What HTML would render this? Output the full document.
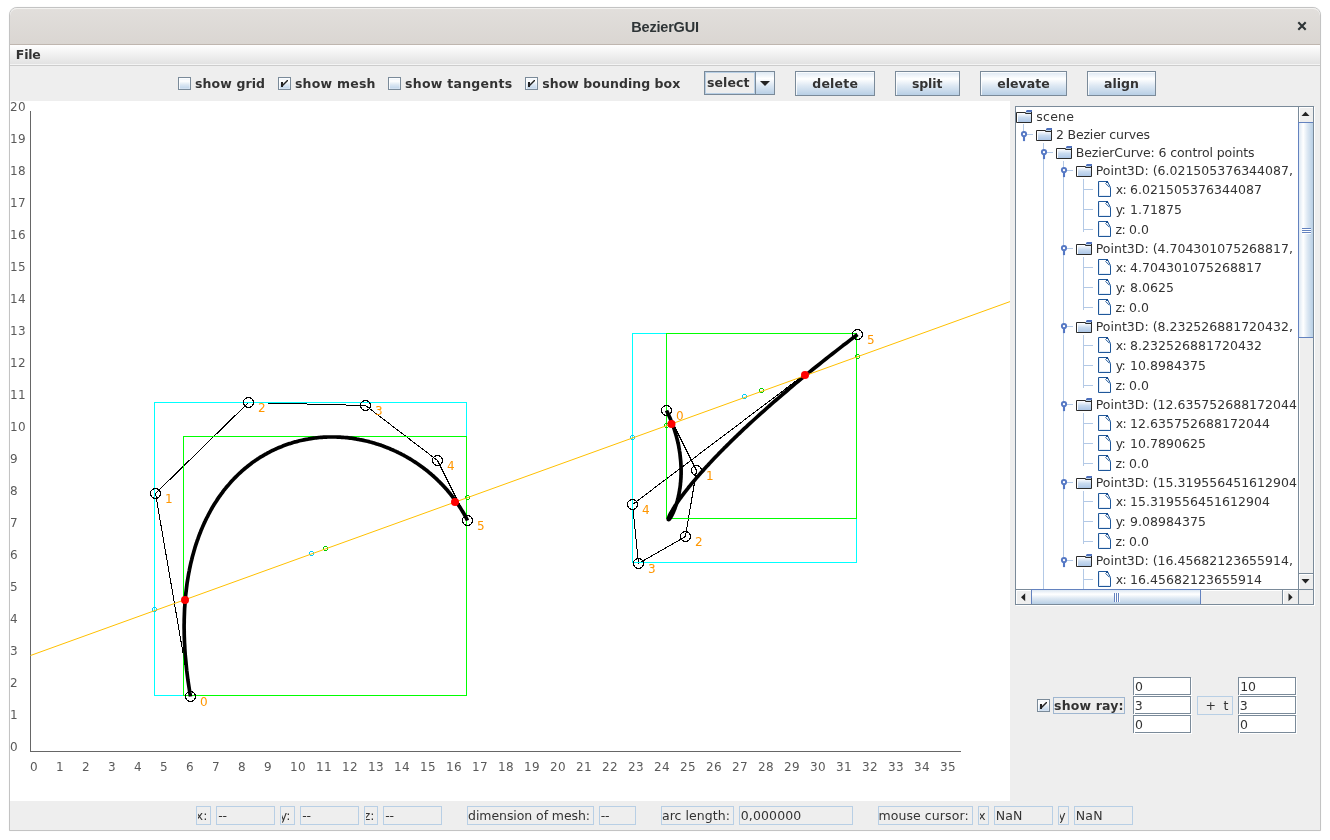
<!DOCTYPE html>
<html lang="en"><head><meta charset="utf-8"><title>BezierGUI</title>
<style>
*{box-sizing:border-box;margin:0;padding:0}
html,body{width:1330px;height:840px;background:#fff;overflow:hidden}
body{position:relative;font-family:"DejaVu Sans", "Liberation Sans", sans-serif;font-size:12.5px;color:#333;line-height:1}
.a{position:absolute}
.t{position:absolute;white-space:pre;line-height:15px;height:15px}
.b{font-weight:bold}
#root{position:absolute;left:0;top:0;width:1330px;height:840px;will-change:transform}
#win{left:9px;top:7px;width:1312px;height:824px;border:1px solid #c3c3c3;border-radius:8px 8px 0 0;background:#eee;overflow:hidden;box-shadow:0 0 1px rgba(0,0,0,.12)}
#title{left:10px;top:8px;width:1310px;height:36px;background:linear-gradient(#e4e1de 0,#e1dedb 2px,#dad6d2 100%);border-radius:7px 7px 0 0;box-shadow:inset 0 1px 0 #f3f2f0}
#tline{left:10px;top:44px;width:1310px;height:1px;background:#bfb6af}
#ttext{left:10px;width:1310px;top:18px;letter-spacing:-0.2px;text-align:center;font-weight:bold;font-size:14.5px;color:#2e3436;line-height:18px;height:18px;font-family:"Liberation Sans","DejaVu Sans",sans-serif}
#menubar{left:10px;top:45px;width:1310px;height:19px;background:linear-gradient(#ffffff,#e2e2e2)}
#mline1{left:10px;top:64px;width:1310px;height:1px;background:#f4f4f4}
#mline2{left:10px;top:65px;width:1310px;height:1px;background:#cccccc}
#canvas{left:10px;top:101px;width:1000px;height:700px;background:#fff}
.cb{position:absolute;width:13px;height:13px;border:1px solid #7a8a99;background:linear-gradient(#e9f0f8 0,#ffffff 28%,#dde8f3 60%,#bdd3ea 100%);box-shadow:inset 1px 1px 0 rgba(255,255,255,.75),inset -1px -1px 0 rgba(255,255,255,.3)}
.btn{position:absolute;height:25px;border:1px solid #7a8a99;background:linear-gradient(#dde8f3 0,#ffffff 30%,#dde8f3 60%,#b8cfe5 100%);box-shadow:inset 1px 1px 0 rgba(255,255,255,.8)}
.tf{position:absolute;height:18px;border:1px solid #7a8a99;background:#fff;box-shadow:1px 1px 0 #fff}
.tf::after{content:"";position:absolute;left:0;bottom:-1px;width:1px;height:1px;background:#fff}
.ro{position:absolute;height:19px;border:1px solid #b8cfe5;background:#eee}
.clip{position:absolute;overflow:hidden}
</style></head>
<body>
<div id="root">
<div class="a" id="win"></div>
<div class="a" id="title"></div><div class="a" id="tline"></div>
<div class="a" id="ttext">BezierGUI</div>
<svg class="a" style="left:1296px;top:20px" width="12" height="12" viewBox="0 0 12 12"><path d="M2.3 2.3 L9.7 9.7 M9.7 2.3 L2.3 9.7" stroke="#2e3436" stroke-width="2.1" stroke-linecap="butt" fill="none"/></svg>
<div class="a" id="menubar"></div><div class="a" id="mline1"></div><div class="a" id="mline2"></div>
<span class="t b" style="left:15.85px;top:47px;letter-spacing:-0.211px;">File</span>
<div class="cb" style="left:178px;top:77px"></div>
<span class="t b" style="left:195.05px;top:76px;letter-spacing:0.103px;">show grid</span>
<div class="cb" style="left:278px;top:77px"></div><svg class="a" style="left:278px;top:77px" width="13" height="13"><rect x="3" y="5" width="2" height="5" fill="#222" shape-rendering="crispEdges"/><path d="M5 7 L9 3 L10 3 L10 4 L5 9 Z" fill="#222"/></svg>
<span class="t b" style="left:294.95px;top:76px;letter-spacing:0.232px;">show mesh</span>
<div class="cb" style="left:388px;top:77px"></div>
<span class="t b" style="left:405.05px;top:76px;letter-spacing:0.264px;">show tangents</span>
<div class="cb" style="left:525px;top:77px"></div><svg class="a" style="left:525px;top:77px" width="13" height="13"><rect x="3" y="5" width="2" height="5" fill="#222" shape-rendering="crispEdges"/><path d="M5 7 L9 3 L10 3 L10 4 L5 9 Z" fill="#222"/></svg>
<span class="t b" style="left:542.25px;top:76px;letter-spacing:0.053px;">show bounding box</span>
<div class="a" style="left:704px;top:71px;width:71px;height:24px;border:1px solid #7a8a99;background:#eee;"></div>
<div class="a" style="left:705px;top:72px;width:50px;height:22px;border:1px solid #b8cfe5"></div>
<div class="a" style="left:755px;top:72px;width:19px;height:22px;border-left:1px solid #7a8a99;background:linear-gradient(#dde8f3 0,#ffffff 30%,#dde8f3 60%,#b8cfe5 100%)"></div>
<svg class="a" style="left:760px;top:81px" width="10" height="5"><path d="M0 0 L10 0 L5 5 Z" fill="#222"/></svg>
<span class="t b" style="left:707.05px;top:75px;letter-spacing:0.074px;">select</span>
<div class="btn" style="left:795px;top:71px;width:80px"></div>
<span class="t b" style="left:812.24px;top:76px;letter-spacing:0.205px;">delete</span>
<div class="btn" style="left:895px;top:71px;width:65px"></div>
<span class="t b" style="left:911.95px;top:76px;letter-spacing:-0.125px;">split</span>
<div class="btn" style="left:980px;top:71px;width:87px"></div>
<span class="t b" style="left:997.21px;top:76px;letter-spacing:0.050px;">elevate</span>
<div class="btn" style="left:1087px;top:71px;width:69px"></div>
<span class="t b" style="left:1103.97px;top:76px;letter-spacing:0.050px;">align</span>
<div class="a" id="canvas"></div>
<svg class="a" style="left:10px;top:101px" width="1000" height="700" viewBox="10 101 1000 700" font-family="DejaVu Sans, Liberation Sans, sans-serif" font-size="12">
<g shape-rendering="crispEdges" stroke="#666" fill="none"><path d="M30.5 111 V751.5 H961"/></g>
<g fill="#5a5a5a" letter-spacing="0.37"><text x="10" y="751">0</text><text x="10" y="719">1</text><text x="10" y="687">2</text><text x="10" y="655">3</text><text x="10" y="623">4</text><text x="10" y="591">5</text><text x="10" y="559">6</text><text x="10" y="527">7</text><text x="10" y="495">8</text><text x="10" y="463">9</text><text x="10" y="431">10</text><text x="10" y="399">11</text><text x="10" y="367">12</text><text x="10" y="335">13</text><text x="10" y="303">14</text><text x="10" y="271">15</text><text x="10" y="239">16</text><text x="10" y="207">17</text><text x="10" y="175">18</text><text x="10" y="143">19</text><text x="10" y="111">20</text><text x="30" y="771">0</text><text x="56" y="771">1</text><text x="82" y="771">2</text><text x="108" y="771">3</text><text x="134" y="771">4</text><text x="160" y="771">5</text><text x="186" y="771">6</text><text x="212" y="771">7</text><text x="238" y="771">8</text><text x="264" y="771">9</text><text x="290" y="771">10</text><text x="316" y="771">11</text><text x="342" y="771">12</text><text x="368" y="771">13</text><text x="394" y="771">14</text><text x="420" y="771">15</text><text x="446" y="771">16</text><text x="472" y="771">17</text><text x="498" y="771">18</text><text x="524" y="771">19</text><text x="550" y="771">20</text><text x="576" y="771">21</text><text x="602" y="771">22</text><text x="628" y="771">23</text><text x="654" y="771">24</text><text x="680" y="771">25</text><text x="706" y="771">26</text><text x="732" y="771">27</text><text x="758" y="771">28</text><text x="784" y="771">29</text><text x="810" y="771">30</text><text x="836" y="771">31</text><text x="862" y="771">32</text><text x="888" y="771">33</text><text x="914" y="771">34</text><text x="940" y="771">35</text></g>
<polyline points="190.5,696.5 155.5,493.5 248.5,402.5 365.5,405.5 437.5,460.5 467.5,520.5" fill="none" stroke="#000" stroke-width="1" shape-rendering="crispEdges"/>
<rect x="154.5" y="402.5" width="312" height="293" fill="none" stroke="#00ffff" shape-rendering="crispEdges"/>
<rect x="183.5" y="436.5" width="283" height="259" fill="none" stroke="#00ff00" shape-rendering="crispEdges"/>
<polyline points="190.5,696.5 189.9,693.1 189.4,689.8 188.9,686.5 188.4,683.2 187.9,679.9 187.5,676.6 187.1,673.4 186.7,670.2 186.4,667.1 186.1,663.9 185.8,660.8 185.5,657.7 185.2,654.6 185.0,651.6 184.8,648.5 184.7,645.5 184.5,642.5 184.4,639.6 184.3,636.7 184.2,633.8 184.2,630.9 184.1,628.0 184.1,625.2 184.2,622.4 184.2,619.6 184.3,616.8 184.4,614.1 184.5,611.4 184.6,608.7 184.8,606.0 185.0,603.4 185.2,600.7 185.4,598.1 185.6,595.6 185.9,593.0 186.2,590.5 186.5,588.0 186.8,585.5 187.1,583.0 187.5,580.6 187.9,578.2 188.3,575.8 188.7,573.4 189.2,571.1 189.6,568.8 190.1,566.5 190.6,564.2 191.1,562.0 191.7,559.7 192.2,557.5 192.8,555.3 193.4,553.2 194.0,551.0 194.6,548.9 195.2,546.8 195.9,544.7 196.6,542.7 197.2,540.7 198.0,538.7 198.7,536.7 199.4,534.7 200.2,532.8 200.9,530.8 201.7,529.0 202.5,527.1 203.3,525.2 204.1,523.4 205.0,521.6 205.8,519.8 206.7,518.0 207.6,516.3 208.5,514.5 209.4,512.8 210.3,511.2 211.2,509.5 212.2,507.8 213.1,506.2 214.1,504.6 215.1,503.0 216.1,501.5 217.1,499.9 218.1,498.4 219.1,496.9 220.2,495.5 221.2,494.0 222.3,492.6 223.3,491.1 224.4,489.7 225.5,488.4 226.6,487.0 227.7,485.7 228.9,484.4 230.0,483.1 231.1,481.8 232.3,480.5 233.5,479.3 234.6,478.1 235.8,476.9 237.0,475.7 238.2,474.5 239.4,473.4 240.6,472.3 241.8,471.2 243.0,470.1 244.3,469.0 245.5,468.0 246.8,467.0 248.0,466.0 249.3,465.0 250.6,464.0 251.8,463.0 253.1,462.1 254.4,461.2 255.7,460.3 257.0,459.4 258.3,458.6 259.6,457.7 260.9,456.9 262.3,456.1 263.6,455.3 264.9,454.5 266.3,453.8 267.6,453.0 269.0,452.3 270.3,451.6 271.7,450.9 273.0,450.3 274.4,449.6 275.8,449.0 277.1,448.4 278.5,447.8 279.9,447.2 281.3,446.7 282.7,446.1 284.0,445.6 285.4,445.1 286.8,444.6 288.2,444.1 289.6,443.6 291.0,443.2 292.4,442.7 293.8,442.3 295.2,441.9 296.6,441.6 298.0,441.2 299.4,440.8 300.9,440.5 302.3,440.2 303.7,439.9 305.1,439.6 306.5,439.3 307.9,439.1 309.3,438.8 310.8,438.6 312.2,438.4 313.6,438.2 315.0,438.0 316.4,437.8 317.8,437.7 319.2,437.5 320.7,437.4 322.1,437.3 323.5,437.2 324.9,437.1 326.3,437.1 327.7,437.0 329.1,437.0 330.5,437.0 331.9,437.0 333.3,437.0 334.7,437.0 336.1,437.0 337.5,437.1 338.9,437.1 340.3,437.2 341.7,437.3 343.1,437.4 344.5,437.5 345.8,437.6 347.2,437.7 348.6,437.9 350.0,438.1 351.3,438.2 352.7,438.4 354.1,438.6 355.4,438.8 356.8,439.1 358.1,439.3 359.5,439.6 360.8,439.8 362.2,440.1 363.5,440.4 364.8,440.7 366.1,441.0 367.5,441.3 368.8,441.6 370.1,442.0 371.4,442.3 372.7,442.7 374.0,443.1 375.3,443.5 376.6,443.9 377.9,444.3 379.2,444.7 380.4,445.1 381.7,445.6 383.0,446.0 384.2,446.5 385.5,447.0 386.7,447.4 388.0,447.9 389.2,448.4 390.4,449.0 391.6,449.5 392.9,450.0 394.1,450.6 395.3,451.1 396.5,451.7 397.7,452.2 398.8,452.8 400.0,453.4 401.2,454.0 402.3,454.6 403.5,455.2 404.7,455.9 405.8,456.5 406.9,457.1 408.1,457.8 409.2,458.4 410.3,459.1 411.4,459.8 412.5,460.5 413.6,461.2 414.7,461.9 415.8,462.6 416.8,463.3 417.9,464.0 418.9,464.7 420.0,465.5 421.0,466.2 422.1,467.0 423.1,467.7 424.1,468.5 425.1,469.3 426.1,470.0 427.1,470.8 428.1,471.6 429.0,472.4 430.0,473.2 431.0,474.0 431.9,474.9 432.9,475.7 433.8,476.5 434.7,477.4 435.6,478.2 436.5,479.0 437.4,479.9 438.3,480.8 439.2,481.6 440.1,482.5 440.9,483.4 441.8,484.3 442.6,485.1 443.5,486.0 444.3,486.9 445.1,487.8 445.9,488.7 446.7,489.6 447.5,490.5 448.3,491.5 449.1,492.4 449.8,493.3 450.6,494.2 451.3,495.2 452.1,496.1 452.8,497.1 453.5,498.0 454.2,499.0 454.9,499.9 455.6,500.9 456.3,501.8 457.0,502.8 457.6,503.7 458.3,504.7 458.9,505.7 459.6,506.7 460.2,507.6 460.8,508.6 461.4,509.6 462.0,510.6 462.6,511.6 463.2,512.5 463.8,513.5 464.3,514.5 464.9,515.5 465.4,516.5 466.0,517.5 466.5,518.5 467.0,519.5 467.5,520.5" fill="none" stroke="#000" stroke-width="3.7" stroke-linejoin="round" stroke-linecap="butt"/>
<circle cx="190.5" cy="696.5" r="5" fill="none" stroke="#000" shape-rendering="crispEdges"/><circle cx="155.5" cy="493.5" r="5" fill="none" stroke="#000" shape-rendering="crispEdges"/><circle cx="248.5" cy="402.5" r="5" fill="none" stroke="#000" shape-rendering="crispEdges"/><circle cx="365.5" cy="405.5" r="5" fill="none" stroke="#000" shape-rendering="crispEdges"/><circle cx="437.5" cy="460.5" r="5" fill="none" stroke="#000" shape-rendering="crispEdges"/><circle cx="467.5" cy="520.5" r="5" fill="none" stroke="#000" shape-rendering="crispEdges"/>
<g fill="#ff9600"><text x="200" y="706">0</text><text x="165" y="503">1</text><text x="258" y="412">2</text><text x="375" y="415">3</text><text x="447" y="470">4</text><text x="477" y="530">5</text></g>
<polyline points="666.5,410.5 696.5,470.5 685.5,536.5 638.5,563.5 632.5,504.5 857.5,334.5" fill="none" stroke="#000" stroke-width="1" shape-rendering="crispEdges"/>
<rect x="632.5" y="333.5" width="224" height="229" fill="none" stroke="#00ffff" shape-rendering="crispEdges"/>
<rect x="666.5" y="333.5" width="190" height="185" fill="none" stroke="#00ff00" shape-rendering="crispEdges"/>
<polyline points="666.5,410.5 667.0,411.5 667.5,412.5 668.0,413.5 668.4,414.5 668.9,415.5 669.3,416.5 669.8,417.5 670.2,418.5 670.6,419.5 671.0,420.5 671.5,421.6 671.8,422.6 672.2,423.6 672.6,424.6 673.0,425.6 673.3,426.6 673.7,427.6 674.0,428.6 674.4,429.6 674.7,430.6 675.0,431.6 675.3,432.6 675.6,433.6 675.9,434.7 676.2,435.7 676.5,436.7 676.7,437.7 677.0,438.7 677.2,439.7 677.5,440.6 677.7,441.6 677.9,442.6 678.2,443.6 678.4,444.6 678.6,445.6 678.8,446.6 678.9,447.6 679.1,448.5 679.3,449.5 679.4,450.5 679.6,451.5 679.7,452.4 679.9,453.4 680.0,454.4 680.1,455.3 680.2,456.3 680.3,457.2 680.4,458.2 680.5,459.1 680.6,460.1 680.7,461.0 680.8,462.0 680.8,462.9 680.9,463.8 680.9,464.7 681.0,465.7 681.0,466.6 681.1,467.5 681.1,468.4 681.1,469.3 681.1,470.2 681.1,471.1 681.1,472.0 681.1,472.9 681.1,473.7 681.1,474.6 681.0,475.5 681.0,476.3 681.0,477.2 680.9,478.0 680.9,478.9 680.8,479.7 680.7,480.6 680.7,481.4 680.6,482.2 680.5,483.0 680.4,483.8 680.4,484.6 680.3,485.4 680.2,486.2 680.1,487.0 680.0,487.8 679.9,488.5 679.7,489.3 679.6,490.1 679.5,490.8 679.4,491.5 679.2,492.3 679.1,493.0 679.0,493.7 678.8,494.4 678.7,495.1 678.5,495.8 678.4,496.5 678.2,497.2 678.1,497.9 677.9,498.5 677.7,499.2 677.6,499.8 677.4,500.5 677.2,501.1 677.1,501.7 676.9,502.3 676.7,502.9 676.5,503.5 676.4,504.1 676.2,504.7 676.0,505.3 675.8,505.8 675.6,506.4 675.4,506.9 675.2,507.4 675.1,507.9 674.9,508.5 674.7,509.0 674.5,509.4 674.3,509.9 674.1,510.4 673.9,510.8 673.7,511.3 673.5,511.7 673.4,512.2 673.2,512.6 673.0,513.0 672.8,513.4 672.6,513.7 672.4,514.1 672.3,514.5 672.1,514.8 671.9,515.2 671.7,515.5 671.6,515.8 671.4,516.1 671.2,516.4 671.1,516.7 670.9,516.9 670.7,517.2 670.6,517.4 670.4,517.7 670.3,517.9 670.1,518.1 670.0,518.3 669.9,518.5 669.7,518.6 669.6,518.8 669.5,518.9 669.4,519.1 669.2,519.2 669.1,519.3 669.0,519.4 668.9,519.5 668.8,519.5 668.8,519.6 668.7,519.6 668.6,519.6 668.5,519.6 668.5,519.6 668.4,519.6 668.4,519.6 668.4,519.5 668.3,519.5 668.3,519.4 668.3,519.3 668.3,519.2 668.3,519.1 668.3,518.9 668.3,518.8 668.4,518.6 668.4,518.4 668.5,518.3 668.5,518.0 668.6,517.8 668.7,517.6 668.8,517.3 668.9,517.1 669.0,516.8 669.1,516.5 669.2,516.2 669.4,515.8 669.5,515.5 669.7,515.1 669.9,514.7 670.1,514.3 670.3,513.9 670.5,513.5 670.8,513.0 671.0,512.6 671.3,512.1 671.6,511.6 671.8,511.1 672.2,510.6 672.5,510.0 672.8,509.4 673.2,508.9 673.5,508.3 673.9,507.7 674.3,507.0 674.7,506.4 675.2,505.7 675.6,505.0 676.1,504.3 676.6,503.6 677.1,502.9 677.6,502.1 678.1,501.3 678.7,500.5 679.2,499.7 679.8,498.9 680.4,498.0 681.1,497.2 681.7,496.3 682.4,495.4 683.1,494.5 683.8,493.5 684.5,492.6 685.3,491.6 686.1,490.6 686.9,489.6 687.7,488.6 688.5,487.5 689.4,486.4 690.3,485.3 691.2,484.2 692.1,483.1 693.1,481.9 694.1,480.8 695.1,479.6 696.1,478.4 697.2,477.1 698.3,475.9 699.4,474.6 700.5,473.3 701.7,472.0 702.9,470.7 704.1,469.3 705.3,468.0 706.6,466.6 707.9,465.2 709.2,463.7 710.6,462.3 712.0,460.8 713.4,459.3 714.8,457.8 716.3,456.2 717.8,454.7 719.3,453.1 720.9,451.5 722.5,449.9 724.1,448.2 725.8,446.6 727.5,444.9 729.2,443.2 731.0,441.4 732.8,439.7 734.6,437.9 736.5,436.1 738.3,434.3 740.3,432.5 742.2,430.6 744.2,428.7 746.3,426.8 748.3,424.9 750.5,422.9 752.6,421.0 754.8,419.0 757.0,417.0 759.3,414.9 761.5,412.9 763.9,410.8 766.3,408.7 768.7,406.5 771.1,404.4 773.6,402.2 776.1,400.0 778.7,397.8 781.3,395.5 784.0,393.3 786.7,391.0 789.4,388.6 792.2,386.3 795.0,383.9 797.9,381.6 800.8,379.1 803.8,376.7 806.8,374.3 809.8,371.8 812.9,369.3 816.1,366.7 819.3,364.2 822.5,361.6 825.8,359.0 829.1,356.4 832.5,353.7 835.9,351.1 839.4,348.4 842.9,345.6 846.5,342.9 850.1,340.1 853.8,337.3 857.5,334.5" fill="none" stroke="#000" stroke-width="3.7" stroke-linejoin="round" stroke-linecap="butt"/>
<circle cx="666.5" cy="410.5" r="5" fill="none" stroke="#000" shape-rendering="crispEdges"/><circle cx="696.5" cy="470.5" r="5" fill="none" stroke="#000" shape-rendering="crispEdges"/><circle cx="685.5" cy="536.5" r="5" fill="none" stroke="#000" shape-rendering="crispEdges"/><circle cx="638.5" cy="563.5" r="5" fill="none" stroke="#000" shape-rendering="crispEdges"/><circle cx="632.5" cy="504.5" r="5" fill="none" stroke="#000" shape-rendering="crispEdges"/><circle cx="857.5" cy="334.5" r="5" fill="none" stroke="#000" shape-rendering="crispEdges"/>
<g fill="#ff9600"><text x="676" y="420">0</text><text x="706" y="480">1</text><text x="695" y="546">2</text><text x="648" y="573">3</text><text x="642" y="514">4</text><text x="867" y="344">5</text></g>
<circle cx="154.5" cy="609.5" r="2" fill="none" stroke="#00ccff" shape-rendering="crispEdges"/><circle cx="311.5" cy="553.5" r="2" fill="none" stroke="#00ccff" shape-rendering="crispEdges"/><circle cx="325.5" cy="548.5" r="2" fill="none" stroke="#00cc00" shape-rendering="crispEdges"/><circle cx="467.5" cy="497.5" r="2" fill="none" stroke="#00cc00" shape-rendering="crispEdges"/><circle cx="632.5" cy="437.5" r="2" fill="none" stroke="#00ccff" shape-rendering="crispEdges"/><circle cx="666.5" cy="425.5" r="2" fill="none" stroke="#00cc00" shape-rendering="crispEdges"/><circle cx="744.5" cy="396.5" r="2" fill="none" stroke="#00ccff" shape-rendering="crispEdges"/><circle cx="761.5" cy="390.5" r="2" fill="none" stroke="#00cc00" shape-rendering="crispEdges"/><circle cx="857.5" cy="356.5" r="2" fill="none" stroke="#00cc00" shape-rendering="crispEdges"/>
<line x1="30.5" y1="655.5" x2="1010" y2="301.6" stroke="#ffc000" stroke-width="1"/>
<circle cx="185.0" cy="600.0" r="4" fill="#ff0000"/><circle cx="455.0" cy="502.0" r="4" fill="#ff0000"/><circle cx="671.5" cy="424.0" r="4" fill="#ff0000"/><circle cx="805.0" cy="375.0" r="4" fill="#ff0000"/>
</svg>
<div class="a" style="left:1015px;top:106px;width:299px;height:499px;border:1px solid #7a8a99;background:#fff;box-shadow:1px 1px 0 #fff"></div>
<div class="a" style="left:1016px;top:107px;width:282px;height:482px;overflow:hidden;background:#fff">
<svg class="a" style="left:0;top:0" width="282" height="482" viewBox="1016 107 282 482" font-family="DejaVu Sans, Liberation Sans, sans-serif" font-size="13">
<defs><linearGradient id="fg" x1="0" y1="0" x2="0" y2="1"><stop offset="0" stop-color="#ffffff"/><stop offset="0.15" stop-color="#f0f5fb"/><stop offset="0.5" stop-color="#c9dbf0"/><stop offset="1" stop-color="#adc7e7"/></linearGradient><g id="fold"><rect x="1" y="3" width="14" height="9" fill="url(#fg)"/><rect x="1" y="3" width="1" height="9" fill="#fff"/><rect x="10" y="2" width="5" height="1" fill="#b8cfe5"/><path d="M11 0 H16 V2 H10 V1 Z" fill="#4d6fba"/><path d="M0.5 12.5 V2.5 H9.5 V3.5 H15.5 V12.5 Z M15.5 2 V4" fill="none" stroke="#2b2b2b" stroke-width="1"/></g><g id="leaf"><path d="M0.5 0.5 H9.5 L12.5 6.5 V15.5 H0.5 Z" fill="#fff" stroke="#1f5799" stroke-width="1" stroke-linejoin="miter"/><path d="M7.5 2.3 L11.6 6.4" fill="none" stroke="#1f5799" stroke-width="1"/><rect x="8" y="0" width="2" height="2" fill="#164a8c"/><path d="M1.5 1.5 V14.5 H11.5" fill="none" stroke="#e3ecf7" stroke-width="1"/></g><g id="hnd"><rect x="-1.05" y="2" width="2.1" height="5" fill="#5578c4"/><circle cx="0" cy="0" r="2.15" fill="#fff" stroke="#5578c4" stroke-width="1.9"/></g></defs>
<g fill="#b3c9e6" shape-rendering="crispEdges"><rect x="1023" y="124" width="1" height="8"/><rect x="1043" y="143" width="1" height="460"/><rect x="1063" y="161" width="1" height="396"/><rect x="1027" y="134" width="6" height="1"/><rect x="1047" y="152" width="6" height="1"/><rect x="1067" y="170" width="6" height="1"/><rect x="1083" y="179" width="1" height="53"/><rect x="1083" y="189" width="10" height="1"/><rect x="1083" y="209" width="10" height="1"/><rect x="1083" y="229" width="10" height="1"/><rect x="1067" y="248" width="6" height="1"/><rect x="1083" y="257" width="1" height="53"/><rect x="1083" y="267" width="10" height="1"/><rect x="1083" y="287" width="10" height="1"/><rect x="1083" y="307" width="10" height="1"/><rect x="1067" y="326" width="6" height="1"/><rect x="1083" y="335" width="1" height="53"/><rect x="1083" y="345" width="10" height="1"/><rect x="1083" y="365" width="10" height="1"/><rect x="1083" y="385" width="10" height="1"/><rect x="1067" y="404" width="6" height="1"/><rect x="1083" y="413" width="1" height="53"/><rect x="1083" y="423" width="10" height="1"/><rect x="1083" y="443" width="10" height="1"/><rect x="1083" y="463" width="10" height="1"/><rect x="1067" y="482" width="6" height="1"/><rect x="1083" y="491" width="1" height="53"/><rect x="1083" y="501" width="10" height="1"/><rect x="1083" y="521" width="10" height="1"/><rect x="1083" y="541" width="10" height="1"/><rect x="1067" y="560" width="6" height="1"/><rect x="1083" y="569" width="1" height="53"/><rect x="1083" y="579" width="10" height="1"/><rect x="1083" y="599" width="10" height="1"/></g>
<use href="#fold" x="1016" y="110"/>
<use href="#fold" x="1036" y="128"/>
<use href="#hnd" x="1024" y="134.1"/>
<use href="#fold" x="1056" y="146"/>
<use href="#hnd" x="1044" y="152.1"/>
<use href="#fold" x="1076" y="164"/>
<use href="#hnd" x="1064" y="170.1"/>
<use href="#leaf" x="1098" y="181"/>
<use href="#leaf" x="1098" y="201"/>
<use href="#leaf" x="1098" y="221"/>
<use href="#fold" x="1076" y="242"/>
<use href="#hnd" x="1064" y="248.1"/>
<use href="#leaf" x="1098" y="259"/>
<use href="#leaf" x="1098" y="279"/>
<use href="#leaf" x="1098" y="299"/>
<use href="#fold" x="1076" y="320"/>
<use href="#hnd" x="1064" y="326.1"/>
<use href="#leaf" x="1098" y="337"/>
<use href="#leaf" x="1098" y="357"/>
<use href="#leaf" x="1098" y="377"/>
<use href="#fold" x="1076" y="398"/>
<use href="#hnd" x="1064" y="404.1"/>
<use href="#leaf" x="1098" y="415"/>
<use href="#leaf" x="1098" y="435"/>
<use href="#leaf" x="1098" y="455"/>
<use href="#fold" x="1076" y="476"/>
<use href="#hnd" x="1064" y="482.1"/>
<use href="#leaf" x="1098" y="493"/>
<use href="#leaf" x="1098" y="513"/>
<use href="#leaf" x="1098" y="533"/>
<use href="#fold" x="1076" y="554"/>
<use href="#hnd" x="1064" y="560.1"/>
<use href="#leaf" x="1098" y="571"/>
<use href="#leaf" x="1098" y="591"/></svg>
<span class="t" style="left:20.32px;top:2px;letter-spacing:0.239px;">scene</span>
<span class="t" style="left:40.08px;top:20px;letter-spacing:-0.196px;">2 Bezier curves</span>
<span class="t" style="left:59.77px;top:38px;letter-spacing:-0.105px;">BezierCurve: 6 control points</span>
<span class="t" style="left:79.77px;top:56px;letter-spacing:0.009px;">Point3D: (6.021505376344087,</span>
<span class="t" style="left:99.74px;top:75px;letter-spacing:-0.600px;">x:</span>
<span class="t" style="left:114.00px;top:75px;letter-spacing:0.050px;">6.021505376344087</span>
<span class="t" style="left:99.73px;top:95px;letter-spacing:-0.600px;">y:</span>
<span class="t" style="left:114.00px;top:95px;letter-spacing:0.050px;">1.71875</span>
<span class="t" style="left:99.56px;top:115px;letter-spacing:-0.600px;">z:</span>
<span class="t" style="left:113.00px;top:115px;letter-spacing:0.050px;">0.0</span>
<span class="t" style="left:79.77px;top:134px;letter-spacing:0.009px;">Point3D: (4.704301075268817,</span>
<span class="t" style="left:99.74px;top:153px;letter-spacing:-0.600px;">x:</span>
<span class="t" style="left:114.00px;top:153px;letter-spacing:0.050px;">4.704301075268817</span>
<span class="t" style="left:99.73px;top:173px;letter-spacing:-0.600px;">y:</span>
<span class="t" style="left:114.00px;top:173px;letter-spacing:0.050px;">8.0625</span>
<span class="t" style="left:99.56px;top:193px;letter-spacing:-0.600px;">z:</span>
<span class="t" style="left:113.00px;top:193px;letter-spacing:0.050px;">0.0</span>
<span class="t" style="left:79.77px;top:212px;letter-spacing:0.009px;">Point3D: (8.232526881720432,</span>
<span class="t" style="left:99.74px;top:231px;letter-spacing:-0.600px;">x:</span>
<span class="t" style="left:114.00px;top:231px;letter-spacing:0.050px;">8.232526881720432</span>
<span class="t" style="left:99.73px;top:251px;letter-spacing:-0.600px;">y:</span>
<span class="t" style="left:114.00px;top:251px;letter-spacing:0.050px;">10.8984375</span>
<span class="t" style="left:99.56px;top:271px;letter-spacing:-0.600px;">z:</span>
<span class="t" style="left:113.00px;top:271px;letter-spacing:0.050px;">0.0</span>
<span class="t" style="left:79.77px;top:290px;letter-spacing:0.010px;">Point3D: (12.635752688172044,</span>
<span class="t" style="left:99.74px;top:309px;letter-spacing:-0.600px;">x:</span>
<span class="t" style="left:114.00px;top:309px;letter-spacing:0.050px;">12.635752688172044</span>
<span class="t" style="left:99.73px;top:329px;letter-spacing:-0.600px;">y:</span>
<span class="t" style="left:114.00px;top:329px;letter-spacing:0.050px;">10.7890625</span>
<span class="t" style="left:99.56px;top:349px;letter-spacing:-0.600px;">z:</span>
<span class="t" style="left:113.00px;top:349px;letter-spacing:0.050px;">0.0</span>
<span class="t" style="left:79.77px;top:368px;letter-spacing:0.010px;">Point3D: (15.319556451612904,</span>
<span class="t" style="left:99.74px;top:387px;letter-spacing:-0.600px;">x:</span>
<span class="t" style="left:114.00px;top:387px;letter-spacing:0.050px;">15.319556451612904</span>
<span class="t" style="left:99.73px;top:407px;letter-spacing:-0.600px;">y:</span>
<span class="t" style="left:114.00px;top:407px;letter-spacing:0.050px;">9.08984375</span>
<span class="t" style="left:99.56px;top:427px;letter-spacing:-0.600px;">z:</span>
<span class="t" style="left:113.00px;top:427px;letter-spacing:0.050px;">0.0</span>
<span class="t" style="left:79.77px;top:446px;letter-spacing:0.009px;">Point3D: (16.45682123655914,</span>
<span class="t" style="left:99.74px;top:465px;letter-spacing:-0.600px;">x:</span>
<span class="t" style="left:114.00px;top:465px;letter-spacing:0.050px;">16.45682123655914</span>
<span class="t" style="left:99.73px;top:485px;letter-spacing:-0.600px;">y:</span>
<span class="t" style="left:114.00px;top:485px;letter-spacing:0.050px;">7.21484375</span>
</div>
<div class="a" style="left:1298px;top:107px;width:15px;height:482px;background:#eee;border-left:1px solid #7a8a99;box-shadow:inset 1px 0 0 #fff"></div>
<div class="a" style="left:1299px;top:107px;width:14px;height:15px;background:#eee;box-shadow:inset 1px 1px 0 #fff"></div>
<svg class="a" style="left:1301px;top:111px" width="9" height="6"><path d="M0.5 5 L4.5 0.7 L8.5 5 Z" fill="#222"/></svg>
<div class="a" style="left:1298px;top:122px;width:15px;height:216px;border:1px solid #6382bf;border-right:none;background:linear-gradient(90deg,#dde8f3 0,#ffffff 30%,#dde8f3 60%,#b8cfe5 100%)"></div>
<svg class="a" style="left:1302px;top:228px" width="9" height="6" shape-rendering="crispEdges"><g fill="#6382bf"><rect x="0" y="0" width="9" height="1"/><rect x="0" y="2" width="9" height="1"/><rect x="0" y="4" width="9" height="1"/></g><g fill="#fff"><rect x="0" y="1" width="9" height="1"/><rect x="0" y="3" width="9" height="1"/><rect x="0" y="5" width="9" height="1"/></g></svg>
<div class="a" style="left:1299px;top:573px;width:14px;height:16px;background:#eee;border-top:1px solid #7a8a99;box-shadow:inset 1px 1px 0 #fff"></div>
<svg class="a" style="left:1301px;top:579px" width="9" height="5"><path d="M0.5 0 L8.5 0 L4.5 4.5 Z" fill="#222"/></svg>
<div class="a" style="left:1016px;top:589px;width:297px;height:15px;background:#eee;border-top:1px solid #7a8a99;box-shadow:inset 0 1px 0 #fff"></div>
<div class="a" style="left:1016px;top:590px;width:15px;height:14px;background:#eee;box-shadow:inset 1px 1px 0 #fff"></div>
<svg class="a" style="left:1021px;top:593px" width="5" height="9"><path d="M4.2 0.2 L0 4.2 L4.2 8.2 Z" fill="#222"/></svg>
<div class="a" style="left:1031px;top:589px;width:170px;height:15px;border:1px solid #6382bf;border-bottom:none;background:linear-gradient(#dde8f3 0,#ffffff 30%,#dde8f3 60%,#b8cfe5 100%)"></div>
<svg class="a" style="left:1114px;top:593px" width="6" height="9" shape-rendering="crispEdges"><g fill="#6382bf"><rect x="0" y="0" width="1" height="9"/><rect x="2" y="0" width="1" height="9"/><rect x="4" y="0" width="1" height="9"/></g><g fill="#fff"><rect x="1" y="0" width="1" height="9"/><rect x="3" y="0" width="1" height="9"/><rect x="5" y="0" width="1" height="9"/></g></svg>
<div class="a" style="left:1282px;top:590px;width:16px;height:14px;background:#eee;border-left:1px solid #7a8a99;box-shadow:inset 1px 1px 0 #fff"></div>
<svg class="a" style="left:1288px;top:593px" width="5" height="9"><path d="M0.5 0.2 L4.6 4.2 L0.5 8.2 Z" fill="#222"/></svg>
<div class="a" style="left:1298px;top:589px;width:15px;height:15px;background:#eee;border-left:1px solid #7a8a99;border-top:1px solid #7a8a99"></div>
<div class="cb" style="left:1037px;top:699px"></div><svg class="a" style="left:1037px;top:699px" width="13" height="13"><rect x="3" y="5" width="2" height="5" fill="#222" shape-rendering="crispEdges"/><path d="M5 7 L9 3 L10 3 L10 4 L5 9 Z" fill="#222"/></svg>
<div class="a" style="left:1053px;top:697px;width:72px;height:17px;border:1px solid #9fb6d0"></div>
<span class="t b" style="left:1054.10px;top:698px;letter-spacing:0.150px;">show ray:</span>
<div class="tf" style="left:1133px;top:677px;width:58px"></div>
<span class="t" style="left:1134.98px;top:679px;">0</span>
<div class="tf" style="left:1133px;top:696px;width:58px"></div>
<span class="t" style="left:1134.85px;top:698px;">3</span>
<div class="tf" style="left:1133px;top:715px;width:58px"></div>
<span class="t" style="left:1134.98px;top:717px;">0</span>
<div class="tf" style="left:1238px;top:677px;width:58px"></div>
<span class="t" style="left:1240.13px;top:679px;">10</span>
<div class="tf" style="left:1238px;top:696px;width:58px"></div>
<span class="t" style="left:1239.85px;top:698px;">3</span>
<div class="tf" style="left:1238px;top:715px;width:58px"></div>
<span class="t" style="left:1239.98px;top:717px;">0</span>
<div class="ro" style="left:1197px;top:696px;width:36px"></div>
<span class="t" style="left:1205.38px;top:698px;">+</span>
<span class="t" style="left:1223.46px;top:698px;">t</span>
<div class="ro" style="left:196px;top:806px;width:15px"></div><div class="clip" style="left:198px;top:807px;width:11px;height:17px"><span class="t" style="left:-2.26px;top:1px;">x:</span>
</div>
<div class="ro" style="left:216px;top:806px;width:59px"></div><div class="clip" style="left:217px;top:807px;width:57px;height:17px"><span class="t" style="left:1.29px;top:1px;letter-spacing:-0.300px;">--</span>
</div>
<div class="ro" style="left:280px;top:806px;width:15px"></div><div class="clip" style="left:282px;top:807px;width:11px;height:17px"><span class="t" style="left:-2.27px;top:1px;">y:</span>
</div>
<div class="ro" style="left:300px;top:806px;width:59px"></div><div class="clip" style="left:301px;top:807px;width:57px;height:17px"><span class="t" style="left:1.29px;top:1px;letter-spacing:-0.300px;">--</span>
</div>
<div class="ro" style="left:364px;top:806px;width:14px"></div><div class="clip" style="left:366px;top:807px;width:10px;height:17px"><span class="t" style="left:-2.24px;top:1px;">z:</span>
</div>
<div class="ro" style="left:383px;top:806px;width:59px"></div><div class="clip" style="left:384px;top:807px;width:57px;height:17px"><span class="t" style="left:1.29px;top:1px;letter-spacing:-0.300px;">--</span>
</div>
<div class="ro" style="left:467px;top:806px;width:127px"></div><div class="clip" style="left:468px;top:807px;width:125px;height:17px"><span class="t" style="left:0.11px;top:1px;letter-spacing:-0.077px;">dimension of mesh:</span>
</div>
<div class="ro" style="left:599px;top:806px;width:37px"></div><div class="clip" style="left:600px;top:807px;width:35px;height:17px"><span class="t" style="left:0.79px;top:1px;letter-spacing:-0.300px;">--</span>
</div>
<div class="ro" style="left:661px;top:806px;width:73px"></div><div class="clip" style="left:662px;top:807px;width:71px;height:17px"><span class="t" style="left:-0.05px;top:1px;letter-spacing:0.051px;">arc length:</span>
</div>
<div class="ro" style="left:739px;top:806px;width:114px"></div><div class="clip" style="left:740px;top:807px;width:112px;height:17px"><span class="t" style="left:0.78px;top:1px;letter-spacing:0.130px;">0,000000</span>
</div>
<div class="ro" style="left:878px;top:806px;width:95px"></div><div class="clip" style="left:879px;top:807px;width:93px;height:17px"><span class="t" style="left:-0.64px;top:1px;letter-spacing:0.094px;">mouse cursor:</span>
</div>
<div class="ro" style="left:978px;top:806px;width:11px"></div><div class="clip" style="left:980px;top:807px;width:7px;height:17px"><span class="t" style="left:-1.66px;top:1px;">x</span>
</div>
<div class="ro" style="left:994px;top:806px;width:59px"></div><div class="clip" style="left:995px;top:807px;width:57px;height:17px"><span class="t" style="left:0.67px;top:1px;letter-spacing:0.196px;">NaN</span>
</div>
<div class="ro" style="left:1058px;top:806px;width:11px"></div><div class="clip" style="left:1060px;top:807px;width:7px;height:17px"><span class="t" style="left:-1.77px;top:1px;">y</span>
</div>
<div class="ro" style="left:1074px;top:806px;width:59px"></div><div class="clip" style="left:1075px;top:807px;width:57px;height:17px"><span class="t" style="left:0.77px;top:1px;letter-spacing:0.246px;">NaN</span>
</div>
</div>
</body></html>
